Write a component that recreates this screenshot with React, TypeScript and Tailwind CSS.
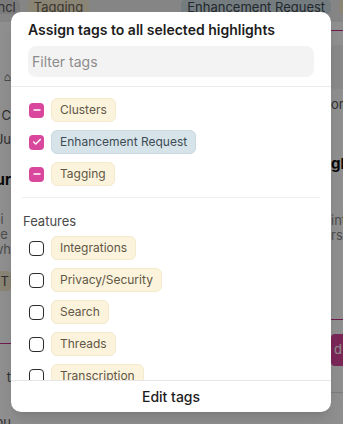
import { Check, Minus } from 'lucide-react';

type Row = { name: string; state: 'none' | 'some' | 'all'; tone?: 'yellow' | 'blue' };

const selected: Row[] = [
  { name: 'Clusters', state: 'some' },
  { name: 'Enhancement Request', state: 'all', tone: 'blue' },
  { name: 'Tagging', state: 'some' },
];

const features: Row[] = [
  { name: 'Integrations', state: 'none' },
  { name: 'Privacy/Security', state: 'none' },
  { name: 'Search', state: 'none' },
  { name: 'Threads', state: 'none' },
  { name: 'Transcription', state: 'none' },
  { name: 'Workspaces', state: 'none' },
];

function Box({ state }: { state: Row['state'] }) {
  if (state === 'none') {
    return <span className="h-[15px] w-[15px] shrink-0 rounded-[4px] border-[1.5px] border-[#2a2a2a] bg-white" />;
  }
  return (
    <span className="flex h-[15px] w-[15px] shrink-0 items-center justify-center rounded-[4px] bg-[#d9479c] text-white">
      {state === 'all' ? <Check size={10} strokeWidth={3.5} /> : <Minus size={10} strokeWidth={4} />}
    </span>
  );
}

function TagRow({ row }: { row: Row }) {
  const chip =
    row.tone === 'blue'
      ? 'bg-[#d6e4ea] border-[#c9d9e0] text-[#3f4b53]'
      : 'bg-[#fcf3dc] border-[#f5eacb] text-[#5f5746]';
  return (
    <div className="flex h-[24px] items-center gap-[7px] pl-[18px]">
      <Box state={row.state} />
      <span className={`flex h-[24px] items-center rounded-[6px] border px-[8px] text-[12px] whitespace-nowrap ${chip}`}>
        {row.name}
      </span>
    </div>
  );
}

function Backdrop() {
  return (
    <div className="flex h-full flex-col text-[13px] text-[#555]">
      <div className="flex h-[22px] items-start gap-[8px] bg-[#eeeeee] whitespace-nowrap">
        <span className="-ml-[10px] rounded bg-[#dcdcdc] px-[4px] leading-[14px]">Incl</span>
        <span className="rounded bg-[#f6ecd0] px-[6px] leading-[14px] text-[#6b6250]">Tagging</span>
        <span className="ml-[70px] h-[22px] w-px bg-[#c8318a]" />
        <span className="ml-[6px] rounded bg-[#cfdde3] px-[6px] leading-[14px] text-[#3d4a52]">Enhancement Request</span>
        <span className="rounded bg-[#f6ecd0] px-[6px] leading-[14px] text-[#6b6250]">Tagging</span>
      </div>
      <div className="flex flex-1 justify-between">
        <div className="flex w-[11px] flex-col items-end whitespace-nowrap">
          <div className="mt-[46px] text-[12px] text-[#333]">⌂</div>
          <div className="mt-[20px]">C</div>
          <div className="mt-[4px]">Ju</div>
          <div className="mt-[20px] text-[15px] font-bold text-[#111]">ur</div>
          <div className="mt-[20px] leading-[15px] text-[#888]">oi<br />he<br />wh</div>
          <div className="mt-[14px] w-[20px] rounded bg-[#f6ecd0] pr-[2px] text-right leading-[20px]">T</div>
          <div className="mt-[52px] h-px w-[20px] bg-[#c8318a]" />
          <div className="mt-[24px]">t</div>
          <div className="mt-[26px]">ou</div>
        </div>
        <div className="flex w-[12px] flex-col whitespace-nowrap">
          <div className="mt-[8px] h-px w-[20px] bg-[#c8318a]" />
          <div className="mt-[14px] h-[44px] w-[20px] rounded bg-[#f5f5f5]" />
          <div className="mt-[6px]">on</div>
          <div className="mt-[38px] text-[15px] font-bold text-[#111]">gh</div>
          <div className="mt-[38px] leading-[15px] text-[#888]">int<br />rs</div>
          <div className="mt-[76px] h-px w-[20px] bg-[#c8318a]" />
          <div className="mt-[14px] flex h-[32px] w-[20px] items-center rounded-l bg-[#d9479c] pl-[3px] text-white">d</div>
          <div className="mt-[26px] h-px w-[20px] bg-[#ddd]" />
        </div>
      </div>
    </div>
  );
}

export default function App() {
  return (
    <div className="relative h-[424px] w-[343px] overflow-hidden bg-white font-['Inter',sans-serif]">
      <Backdrop />
      <div className="absolute inset-0 bg-black/[0.44]" />

      <div className="absolute left-[11px] top-[12px] flex h-[400px] w-[320px] flex-col overflow-hidden rounded-[10px] bg-white shadow-lg">
        <div className="border-b border-[#ececec] px-[17px] pt-[8px] pb-[9px]">
          <h2 className="text-[14px] leading-[20px] font-semibold text-[#1d1d1d]">Assign tags to all selected highlights</h2>
          <input
            className="mt-[6px] h-[31px] w-full rounded-[8px] bg-[#f3f3f3] px-[4px] text-[14px] text-[#222] outline-none placeholder:text-[#8c8c8c]"
            placeholder="Filter tags"
          />
        </div>

        <div className="flex-1 overflow-hidden">
          <div className="flex flex-col gap-[8px] pt-[11px] pb-[11px]">
            {selected.map((r) => (
              <TagRow key={r.name} row={r} />
            ))}
          </div>
          <div className="mx-[11px] h-px bg-[#efefef]" />
          <div className="px-[12px] pt-[14px] pb-[3px] text-[13px] leading-[18px] text-[#4a4a4a]">Features</div>
          <div className="flex flex-col gap-[8px] pt-[3px]">
            {features.map((r) => (
              <TagRow key={r.name} row={r} />
            ))}
          </div>
        </div>

        <div className="flex h-[32px] shrink-0 items-center justify-center border-t border-[#e6e6e6] text-[14px] font-medium text-[#1d1d1d]">
          Edit tags
        </div>
      </div>
    </div>
  );
}
